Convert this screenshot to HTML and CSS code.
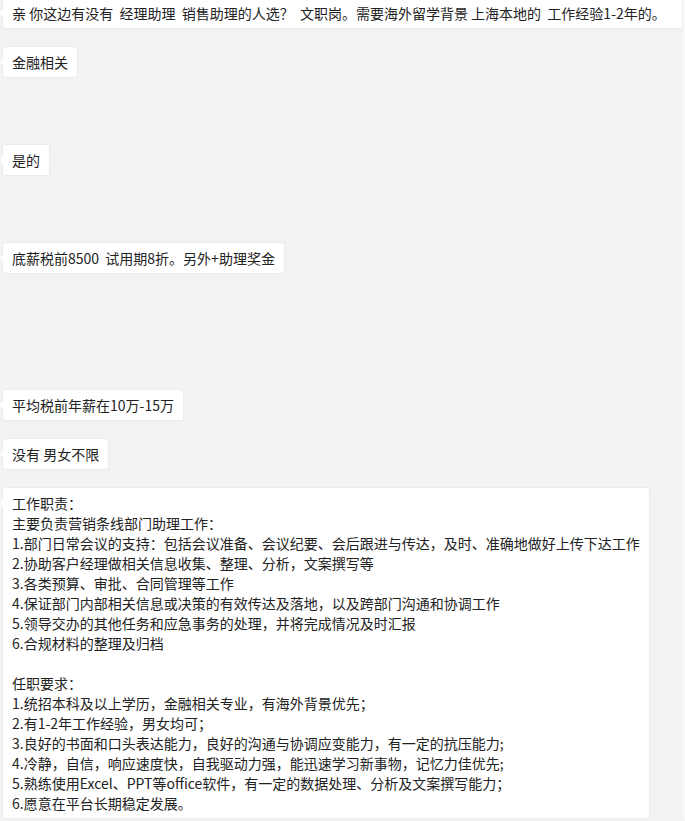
FILE: index.html
```html
<!DOCTYPE html>
<html>
<head>
    <title>聊天记录</title>
    <link rel="stylesheet" href="styles.css">
</head>
<body>
<div class="chat">
    <div class="bubble wide">亲 你这边有没有  经理助理  销售助理的人选？  文职岗。需要海外留学背景 上海本地的  工作经验1-2年的。</div>
    <div class="bubble gap-s">金融相关</div>
    <div class="bubble gap-m">是的</div>
    <div class="bubble gap-m">底薪税前8500  试用期8折。另外+助理奖金</div>
    <div class="bubble gap-l">平均税前年薪在10万-15万</div>
    <div class="bubble gap-s">没有 男女不限</div>
    <div class="bubble gap-s">工作职责：
主要负责营销条线部门助理工作：
1.部门日常会议的支持：包括会议准备、会议纪要、会后跟进与传达，及时、准确地做好上传下达工作
2.协助客户经理做相关信息收集、整理、分析，文案撰写等
3.各类预算、审批、合同管理等工作
4.保证部门内部相关信息或决策的有效传达及落地，以及跨部门沟通和协调工作
5.领导交办的其他任务和应急事务的处理，并将完成情况及时汇报
6.合规材料的整理及归档

任职要求：
1.统招本科及以上学历，金融相关专业，有海外背景优先；
2.有1-2年工作经验，男女均可；
3.良好的书面和口头表达能力，良好的沟通与协调应变能力，有一定的抗压能力;
4.冷静，自信，响应速度快，自我驱动力强，能迅速学习新事物，记忆力佳优先;
5.熟练使用Excel、PPT等office软件，有一定的数据处理、分析及文案撰写能力；
6.愿意在平台长期稳定发展。</div>
</div>
</body>
</html>
```

FILE: styles.css
```css
body {
    margin: 0;
    padding: 0;
    background-color: #f3f3f3;
    border-right: 2px solid #f8f8f8;
    font-family: "Microsoft YaHei", "Noto Sans CJK SC", sans-serif;
    font-size: 14px;
    color: #222;
    overflow: hidden;
}
.chat {
    display: flex;
    flex-direction: column;
    align-items: flex-start;
    padding: 0 0 0 2px;
    margin-top: -3px;
}
.bubble {
    position: relative;
    background: #ffffff;
    border: 1px solid #ebebeb;
    border-radius: 3px;
    padding: 5px 9px 5px 9px;
    line-height: 20px;
    white-space: pre-wrap;
}
.bubble::before {
    content: "";
    position: absolute;
    left: -3px;
    top: 11px;
    border-top: 4px solid transparent;
    border-bottom: 4px solid transparent;
    border-right: 3px solid #ffffff;
}
.bubble.wide {
    align-self: stretch;
}
.gap-s {
    margin-top: 17px;
}
.gap-m {
    margin-top: 66px;
}
.gap-l {
    margin-top: 115px;
}
```
